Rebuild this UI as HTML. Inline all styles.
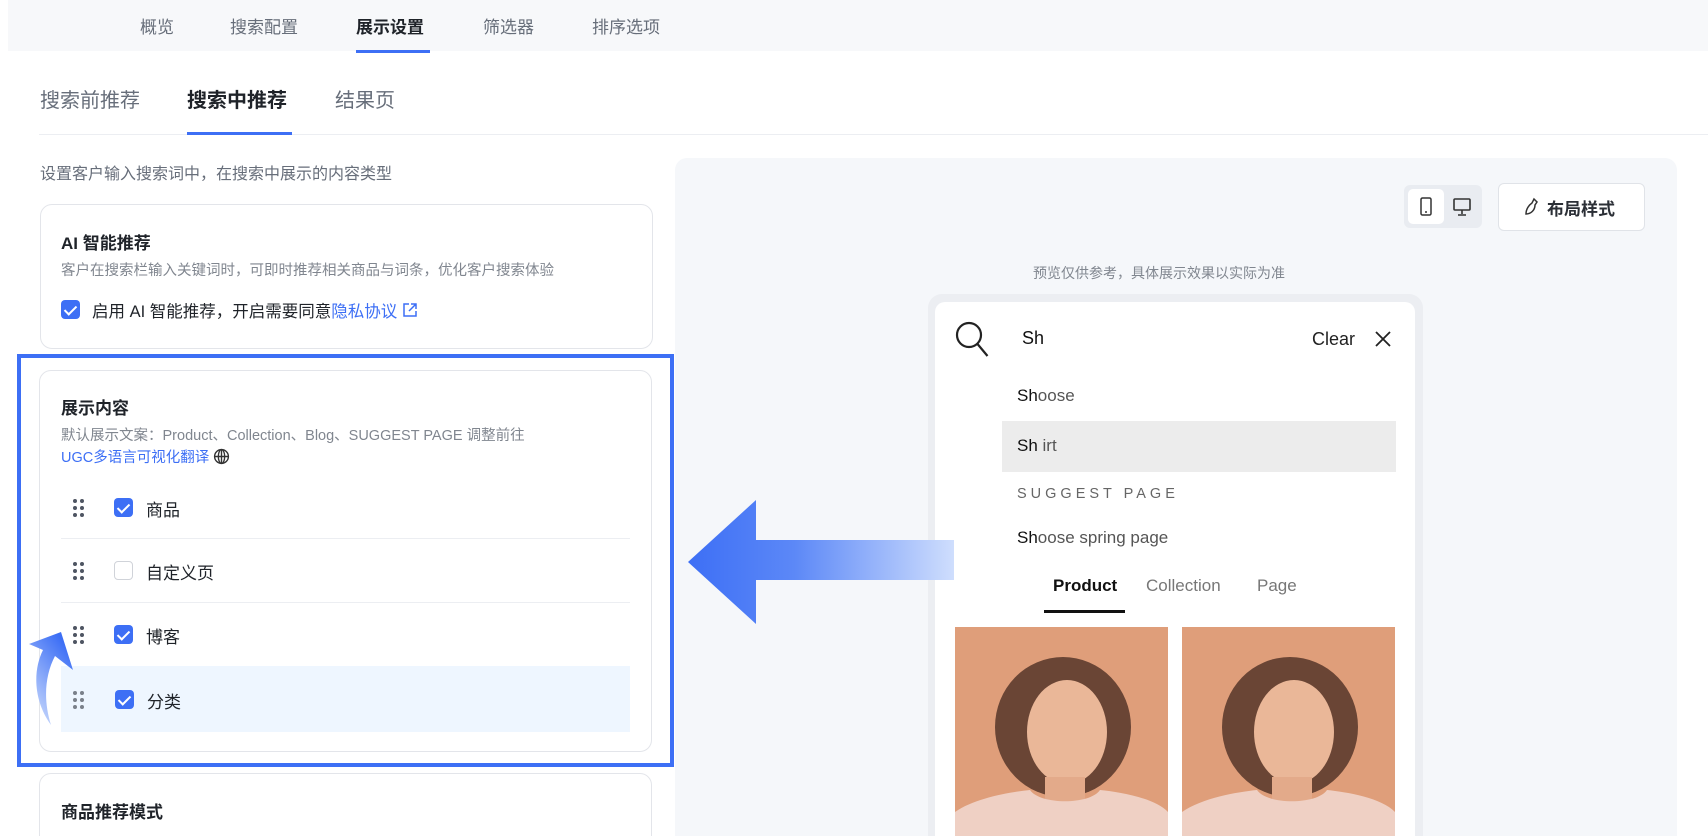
<!DOCTYPE html>
<html style="width:1708px;height:836px;overflow:hidden"><head><meta charset="utf-8">
<style>
*{margin:0;padding:0;box-sizing:border-box}
body{width:1708px;height:836px;overflow:hidden;background:#fff;font-family:"Liberation Sans","Noto Sans CJK SC",sans-serif;color:#1f2329;position:relative}
.a{position:absolute;white-space:nowrap}
.card{position:absolute;border:1px solid #e3e5ea;border-radius:12px;background:#fff}
.cb{position:absolute;width:19px;height:19px;border-radius:4px;background:#3d6ff5}
.cb:after{content:"";position:absolute;left:6px;top:2.5px;width:5px;height:10px;border:solid #fff;border-width:0 2.2px 2.2px 0;transform:rotate(45deg)}
.cbo{position:absolute;width:19px;height:19px;border-radius:4px;border:1.5px solid #d0d3d9;background:#fff}
.dots{position:absolute;width:14px;height:20px}
.dots i{position:absolute;width:4px;height:4px;border-radius:50%;background:#4e5562}
.t17{font-size:17px}
</style></head><body>

<div class="a" style="left:8px;top:0;width:1700px;height:51px;background:#f7f8fa"></div>
<div class="a t17" style="left:140px;top:13px;color:#676e7a">概览</div>
<div class="a t17" style="left:230px;top:13px;color:#676e7a">搜索配置</div>
<div class="a t17" style="left:356px;top:13px;color:#1f2329;font-weight:bold">展示设置</div>
<div class="a t17" style="left:483px;top:13px;color:#676e7a">筛选器</div>
<div class="a t17" style="left:592px;top:13px;color:#676e7a">排序选项</div>
<div class="a" style="left:356px;top:50px;width:74px;height:3px;background:#3d6ff5"></div>

<div class="a" style="left:40px;top:84px;font-size:20px;color:#676e7a">搜索前推荐</div>
<div class="a" style="left:187px;top:84px;font-size:20px;font-weight:bold">搜索中推荐</div>
<div class="a" style="left:335px;top:84px;font-size:20px;color:#676e7a">结果页</div>
<div class="a" style="left:39px;top:134px;width:1669px;height:1px;background:#eceef2"></div>
<div class="a" style="left:187px;top:132px;width:105px;height:3px;background:#3d6ff5"></div>

<div class="a" style="left:40px;top:160px;font-size:16px;color:#676e7a">设置客户输入搜索词中，在搜索中展示的内容类型</div>

<div class="card" style="left:40px;top:204px;width:613px;height:145px"></div>
<div class="a" style="left:61px;top:229px;font-size:17px;font-weight:bold">AI 智能推荐</div>
<div class="a" style="left:61px;top:259px;font-size:14.5px;color:#80868f">客户在搜索栏输入关键词时，可即时推荐相关商品与词条，优化客户搜索体验</div>
<div class="cb" style="left:61px;top:300px"></div>
<div class="a" style="left:92px;top:298px;font-size:16.5px">启用 AI 智能推荐，开启需要同意<span style="color:#3d6ff5">隐私协议</span> <svg width="16" height="16" viewBox="0 0 16 16" style="vertical-align:-1px"><path d="M7 2H2v12h12V9M9 2h5v5M14 2L7 9" fill="none" stroke="#3d6ff5" stroke-width="1.5"/></svg></div>

<div class="a" style="left:17px;top:354px;width:657px;height:413px;border:4px solid #3d6ff5"></div>
<div class="card" style="left:39px;top:370px;width:613px;height:382px"></div>
<div class="a" style="left:61px;top:394px;font-size:17px;font-weight:bold">展示内容</div>
<div class="a" style="left:61px;top:424px;font-size:14.5px;color:#80868f">默认展示文案：Product、Collection、Blog、SUGGEST PAGE 调整前往</div>
<div class="a" style="left:61px;top:446px;font-size:14.5px;color:#3d6ff5">UGC多语言可视化翻译 <svg width="17" height="17" viewBox="0 0 16 16" style="vertical-align:-3px"><circle cx="8" cy="8" r="6.5" fill="none" stroke="#333" stroke-width="1.3"/><ellipse cx="8" cy="8" rx="3" ry="6.5" fill="none" stroke="#333" stroke-width="1.3"/><path d="M1.5 8h13M8 1.5v13" stroke="#333" stroke-width="1.3"/></svg></div>

<div class="a" style="left:61px;top:666px;width:569px;height:66px;background:#eef6ff"></div>
<div class="a" style="left:61px;top:538px;width:569px;height:1px;background:#eceef2"></div>
<div class="a" style="left:61px;top:602px;width:569px;height:1px;background:#eceef2"></div>

<div class="dots" style="left:73px;top:499px"><i style="left:0;top:0"></i><i style="left:7px;top:0"></i><i style="left:0;top:7px"></i><i style="left:7px;top:7px"></i><i style="left:0;top:14px"></i><i style="left:7px;top:14px"></i></div>
<div class="cb" style="left:114px;top:498px"></div>
<div class="a" style="left:146px;top:496px;font-size:17px">商品</div>

<div class="dots" style="left:73px;top:562px"><i style="left:0;top:0"></i><i style="left:7px;top:0"></i><i style="left:0;top:7px"></i><i style="left:7px;top:7px"></i><i style="left:0;top:14px"></i><i style="left:7px;top:14px"></i></div>
<div class="cbo" style="left:114px;top:561px"></div>
<div class="a" style="left:146px;top:559px;font-size:17px">自定义页</div>

<div class="dots" style="left:73px;top:626px"><i style="left:0;top:0"></i><i style="left:7px;top:0"></i><i style="left:0;top:7px"></i><i style="left:7px;top:7px"></i><i style="left:0;top:14px"></i><i style="left:7px;top:14px"></i></div>
<div class="cb" style="left:114px;top:625px"></div>
<div class="a" style="left:146px;top:623px;font-size:17px">博客</div>

<div class="dots" style="left:73px;top:691px"><i style="left:0;top:0;background:#7a808a"></i><i style="left:7px;top:0;background:#7a808a"></i><i style="left:0;top:7px;background:#7a808a"></i><i style="left:7px;top:7px;background:#7a808a"></i><i style="left:0;top:14px;background:#7a808a"></i><i style="left:7px;top:14px;background:#7a808a"></i></div>
<div class="cb" style="left:115px;top:690px"></div>
<div class="a" style="left:147px;top:688px;font-size:17px">分类</div>

<svg class="a" style="left:25px;top:620px" width="60" height="110" viewBox="0 0 60 110">
<defs><linearGradient id="cg" x1="0" y1="1" x2="0.6" y2="0"><stop offset="0" stop-color="#dbe7fd"/><stop offset="1" stop-color="#3d6ff5"/></linearGradient></defs>
<path d="M36 12 L4 24 L18 30 C8 50 8 80 26 105 C18 80 20 55 30 36 L48 50 Z" fill="url(#cg)"/>
</svg>

<div class="card" style="left:39px;top:773px;width:613px;height:90px"></div>
<div class="a" style="left:61px;top:798px;font-size:17px;font-weight:bold">商品推荐模式</div>

<div class="a" style="left:675px;top:158px;width:1002px;height:700px;background:#f5f7fa;border-radius:12px"></div>
<div class="a" style="left:1404px;top:185px;width:78px;height:43px;background:#e9ecf1;border-radius:6px"></div>
<div class="a" style="left:1408px;top:189px;width:36px;height:35px;background:#fff;border-radius:5px"></div>
<svg class="a" style="left:1418px;top:196px" width="16" height="22" viewBox="0 0 16 22"><rect x="3" y="2" width="10" height="17" rx="1.5" fill="none" stroke="#333" stroke-width="1.5"/><path d="M7 16h2" stroke="#333" stroke-width="1.5"/></svg>
<svg class="a" style="left:1452px;top:197px" width="20" height="20" viewBox="0 0 20 20"><rect x="2" y="2" width="16" height="11" rx="1" fill="none" stroke="#333" stroke-width="1.6"/><path d="M10 13v4M6 18h8" stroke="#333" stroke-width="1.6"/></svg>
<div class="a" style="left:1498px;top:183px;width:147px;height:48px;background:#fff;border:1px solid #e0e3e8;border-radius:6px"></div>
<svg class="a" style="left:1521px;top:196px" width="20" height="22" viewBox="0 0 20 22"><path d="M13 3l3 3-2 3c0 5-4 9-9 9 0-5 3-9 6-11z" fill="none" stroke="#333" stroke-width="1.5"/></svg>
<div class="a" style="left:1547px;top:195px;font-size:17px;font-weight:bold;color:#2b2f36">布局样式</div>

<div class="a" style="left:1033px;top:263px;font-size:14px;color:#80868f">预览仅供参考，具体展示效果以实际为准</div>

<div class="a" style="left:928px;top:294px;width:495px;height:560px;background:#eceef2;border-radius:14px"></div>
<div class="a" style="left:935px;top:302px;width:480px;height:560px;background:#fff;border-radius:10px"></div>
<svg class="a" style="left:954px;top:320px" width="38" height="40" viewBox="0 0 38 40"><circle cx="15" cy="15" r="12" fill="none" stroke="#222" stroke-width="2.2"/><path d="M23.5 24l10 12" stroke="#222" stroke-width="2.2"/></svg>
<div class="a" style="left:1022px;top:328px;font-size:18px;color:#111">Sh</div>
<div class="a" style="left:1312px;top:329px;font-size:18px;color:#222">Clear</div>
<svg class="a" style="left:1374px;top:330px" width="18" height="18" viewBox="0 0 18 18"><path d="M2 2l14 14M16 2L2 16" stroke="#222" stroke-width="1.8"/></svg>
<div class="a" style="left:1017px;top:386px;font-size:17px;color:#111">Sh<span style="color:#555">oose</span></div>
<div class="a" style="left:1002px;top:421px;width:394px;height:51px;background:#ececec"></div>
<div class="a" style="left:1017px;top:436px;font-size:17px;color:#111">Sh <span style="color:#555">irt</span></div>
<div class="a" style="left:1017px;top:486px;font-size:14.5px;color:#666;letter-spacing:4px">SUGGEST PAGE</div>
<div class="a" style="left:1017px;top:528px;font-size:17px;color:#111">Sh<span style="color:#555">oose spring page</span></div>
<div class="a" style="left:1053px;top:576px;font-size:17px;color:#111;font-weight:bold">Product</div>
<div class="a" style="left:1146px;top:576px;font-size:17px;color:#777">Collection</div>
<div class="a" style="left:1257px;top:576px;font-size:17px;color:#777">Page</div>
<div class="a" style="left:1044px;top:610px;width:81px;height:3px;background:#111"></div>

<svg class="a" style="left:955px;top:627px" width="213" height="220" viewBox="0 0 213 220"><rect width="213" height="220" fill="#df9e7a"/><ellipse cx="108" cy="100" rx="68" ry="70" fill="#6a4535"/><ellipse cx="112" cy="105" rx="40" ry="52" fill="#eab798"/><path d="M90 150h40v40H90z" fill="#e3aa8a"/><path d="M0 220V185c20-14 55-20 75-22 10 15 60 15 70 0 20 2 55 8 68 22v35z" fill="#efd0c4"/></svg>
<svg class="a" style="left:1182px;top:627px" width="213" height="220" viewBox="0 0 213 220"><rect width="213" height="220" fill="#df9e7a"/><ellipse cx="108" cy="100" rx="68" ry="70" fill="#6a4535"/><ellipse cx="112" cy="105" rx="40" ry="52" fill="#eab798"/><path d="M90 150h40v40H90z" fill="#e3aa8a"/><path d="M0 220V185c20-14 55-20 75-22 10 15 60 15 70 0 20 2 55 8 68 22v35z" fill="#efd0c4"/></svg>

<svg class="a" style="left:686px;top:498px" width="270" height="128" viewBox="0 0 270 128">
<defs><linearGradient id="bg" x1="0" y1="0" x2="1" y2="0"><stop offset="0" stop-color="#3d6ff5"/><stop offset="0.4" stop-color="#5c88f7"/><stop offset="1" stop-color="#cfdefd"/></linearGradient></defs>
<path d="M2 64 L70 2 L70 42 L268 42 L268 82 L70 82 L70 126 Z" fill="url(#bg)"/>
</svg>
</body></html>
